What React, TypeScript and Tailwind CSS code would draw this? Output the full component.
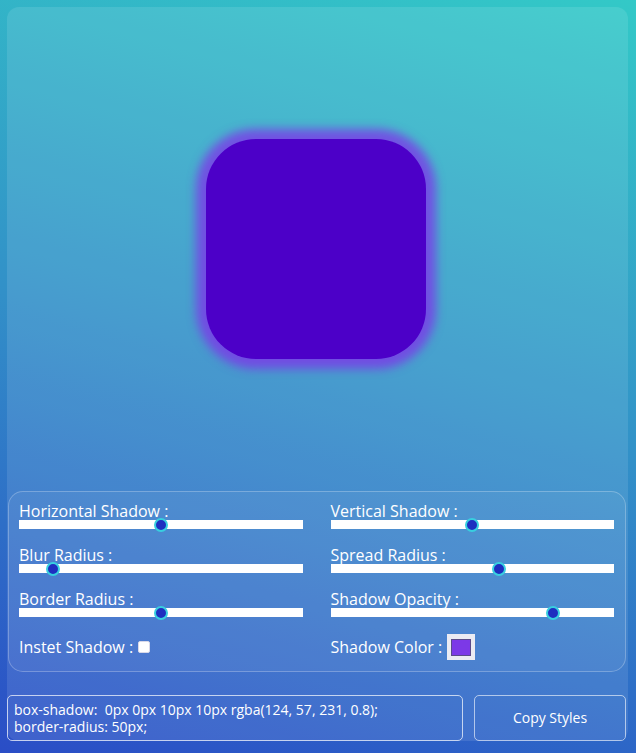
import { useState } from 'react';

const sliderClass =
  'block w-full h-[9px] appearance-none bg-white outline-none cursor-pointer ' +
  '[&::-webkit-slider-thumb]:appearance-none [&::-webkit-slider-thumb]:w-[14px] [&::-webkit-slider-thumb]:h-[14px] ' +
  '[&::-webkit-slider-thumb]:rounded-full [&::-webkit-slider-thumb]:bg-[#1e2fc0] [&::-webkit-slider-thumb]:border-2 ' +
  '[&::-webkit-slider-thumb]:border-[#38cfe0]';

type SliderProps = {
  label: string;
  value: number;
  min: number;
  max: number;
  step?: number;
  onChange: (v: number) => void;
};

const Slider = ({ label, value, min, max, step = 1, onChange }: SliderProps) => (
  <div className="flex flex-col">
    <label className="text-base leading-[18px] text-white">{label}</label>
    <input
      type="range"
      min={min}
      max={max}
      step={step}
      value={value}
      onChange={(e) => onChange(Number(e.target.value))}
      className={sliderClass}
    />
  </div>
);

export default function App() {
  const [hShadow, setHShadow] = useState(0);
  const [vShadow, setVShadow] = useState(0);
  const [blur, setBlur] = useState(10);
  const [spread, setSpread] = useState(10);
  const [radius, setRadius] = useState(50);
  const [opacity, setOpacity] = useState(0.8);
  const [inset, setInset] = useState(false);

  const shadow = `${inset ? 'inset ' : ''}${hShadow}px ${vShadow}px ${blur}px ${spread}px rgba(124, 57, 231, ${opacity})`;

  return (
    <div
      className="min-h-screen bg-[linear-gradient(15deg,#2a4dc6_0%,#3290c8_50%,#33c9c7_100%)] pt-[7px] pb-[13px]"
      style={{ fontFamily: '"Open Sans", "Noto Sans", sans-serif' }}
    >
      <div className="ml-[7px] mr-[8px] rounded-xl bg-white/10">
        {/* preview */}
        <div className="flex h-[484px] items-center justify-center pr-[3px]">
          <div
            className="h-[220px] w-[220px] bg-[#4c00c8]"
            style={{ boxShadow: shadow, borderRadius: `${radius}px` }}
          />
        </div>

        {/* controls */}
        <div className="ml-px mr-[2px] rounded-[15px] border border-white/25 bg-white/5 pt-[10px] pb-[11px] pl-[10px] pr-[11px]">
          <div className="grid grid-cols-2 gap-x-[28px] gap-y-[17px]">
            <Slider label="Horizontal Shadow :" value={hShadow} min={-50} max={50} onChange={setHShadow} />
            <Slider label="Vertical Shadow :" value={vShadow} min={-50} max={50} onChange={setVShadow} />
            <Slider label="Blur Radius :" value={blur} min={0} max={100} onChange={setBlur} />
            <Slider label="Spread Radius :" value={spread} min={-50} max={50} onChange={setSpread} />
            <Slider label="Border Radius :" value={radius} min={0} max={100} onChange={setRadius} />
            <Slider label="Shadow Opacity :" value={opacity} min={0} max={1} step={0.01} onChange={setOpacity} />
            <div className="flex h-[26px] items-center gap-[5px] text-base text-white">
              <span>Instet Shadow :</span>
              <input
                type="checkbox"
                checked={inset}
                onChange={(e) => setInset(e.target.checked)}
                className="h-[12px] w-[12px] appearance-none rounded-[2px] border border-[#d8d8e8] bg-white"
              />
            </div>
            <div className="flex h-[26px] items-center gap-[5px] text-base text-white">
              <span>Shadow Color :</span>
              <div className="flex h-[26px] w-[28px] items-center justify-center border-[3px] border-[#ebebf3] bg-[#ebebf3]">
                <div className="h-[17px] w-[20px] border border-[#5a4a8a] bg-[#7c39e7]" />
              </div>
            </div>
          </div>
        </div>

        {/* output */}
        <div className="mt-[23px] mr-[2px] flex gap-[11px]">
          <div className="h-[46px] flex-1 whitespace-pre rounded-[5px] border border-white/70 px-[6px] pt-[5px] text-sm leading-[17px] text-white">
            {`box-shadow:  ${shadow};\nborder-radius: ${radius}px;`}
          </div>
          <button className="h-[46px] w-[152px] rounded-[5px] border border-white/60 text-sm text-white">
            Copy Styles
          </button>
        </div>
      </div>
    </div>
  );
}
